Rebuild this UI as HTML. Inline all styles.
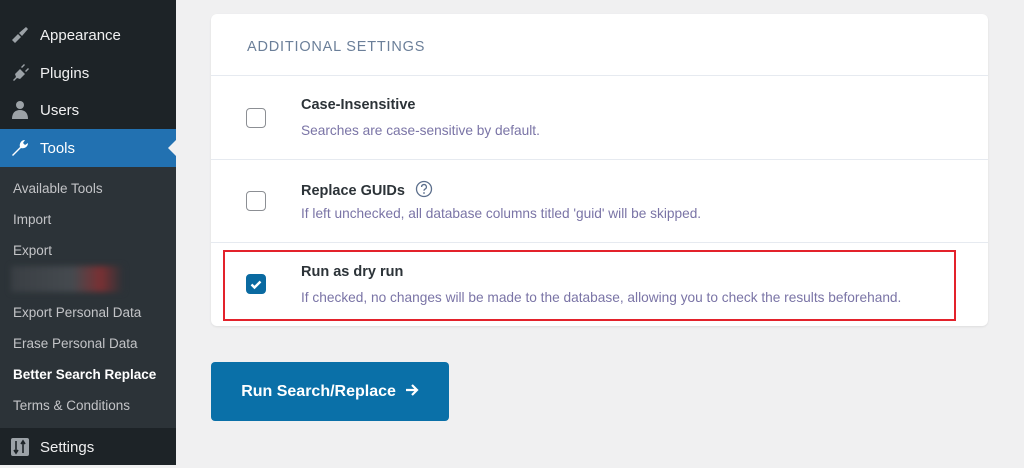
<!DOCTYPE html>
<html><head><style>
body{margin:0;width:1024px;height:465px;background:#f0f0f1;font-family:"Liberation Sans",sans-serif;position:relative;overflow:hidden}
.side{position:absolute;left:0;top:0;width:176px;height:465px;background:#1d2327}
.mi{position:absolute;left:0;width:176px;height:38px;color:#f0f0f1;font-size:15px;line-height:40px}
.mi span{position:absolute;left:40px}
.mi svg{position:absolute;left:10px;top:9px}
.sub{position:absolute;left:0;top:167px;width:176px;height:261px;background:#2c3338}
.sub div{position:absolute;left:13px;font-size:13.5px;color:#c3c4c7}
.card{position:absolute;left:211px;top:14px;width:777px;height:312px;background:#fff;border-radius:6px;box-shadow:0 1px 2px rgba(0,0,0,.08)}
.hd{position:absolute;left:36px;top:25px;font-size:14.5px;letter-spacing:.8px;color:#6b7f99}
.ln{position:absolute;left:0;width:777px;height:1px;background:#e6eaf0}
.cb{position:absolute;left:35px;width:18px;height:18px;border:1px solid #8c8f94;border-radius:4px;background:#fff}
.t{position:absolute;left:90px;font-size:14.5px;font-weight:bold;color:#2c3338}
.d{position:absolute;left:90px;font-size:13.7px;color:#7a74a6}
</style></head><body>
<div class="side">
<div class="mi" style="top:16px"><svg width="20" height="20" viewBox="0 0 20 20"><path d="M2 15l6-6 3 3-6 6zM9 8l7-6 2 2-6 7z" fill="#9ca2a7"/></svg><span>Appearance</span></div>
<div class="mi" style="top:54px"><svg width="20" height="20" viewBox="0 0 20 20"><path d="M3 17l3-3-1-3 5-5 5 5-5 5-3-1-3 3zM11 4l3-3 1 1-3 3zM15 8l3-3 1 1-3 3z" fill="#9ca2a7"/></svg><span>Plugins</span></div>
<div class="mi" style="top:91px"><svg width="20" height="20" viewBox="0 0 20 20"><circle cx="10" cy="5" r="4" fill="#9ca2a7"/><path d="M2 19c0-6 3-9 8-9s8 3 8 9z" fill="#9ca2a7"/></svg><span>Users</span></div>
<div class="mi" style="top:129px;background:#2271b1;color:#fff"><svg width="20" height="20" viewBox="0 0 20 20"><path d="M2 17l8-8c-1-3 1-7 5-7l-2 3 2 2 3-2c0 4-4 6-7 5l-8 8z" fill="#fff"/></svg><span>Tools</span><div style="position:absolute;right:0;top:11px;border:8px solid transparent;border-right-color:#f0f0f1"></div></div>
<div class="sub">
<div style="top:14px">Available Tools</div>
<div style="top:45px">Import</div>
<div style="top:76px">Export</div>
<div style="top:99px;left:11px;width:112px;height:26px;background:linear-gradient(90deg,#3a3f44,#454a4f 55%,#7a3033 80%,#2c3338);filter:blur(3px)"></div>
<div style="top:138px">Export Personal Data</div>
<div style="top:169px">Erase Personal Data</div>
<div style="top:200px;color:#fff;font-weight:bold">Better Search Replace</div>
<div style="top:231px">Terms &amp; Conditions</div>
</div>
<div class="mi" style="top:428px"><svg width="20" height="20" viewBox="0 0 20 20"><rect x="1" y="1" width="18" height="18" rx="2" fill="#9ca2a7"/><path d="M6 4v12M4 13l2 3 2-3M13 16V4M11 7l2-3 2 3" stroke="#1d2327" stroke-width="1.6" fill="none"/></svg><span>Settings</span></div>
</div>
<div class="card">
<div class="hd">ADDITIONAL SETTINGS</div>
<div class="ln" style="top:61px"></div>
<div class="cb" style="top:94px"></div>
<div class="t" style="top:83px">Case-Insensitive</div>
<div class="d" style="top:109px">Searches are case-sensitive by default.</div>
<div class="ln" style="top:145px"></div>
<div class="cb" style="top:177px"></div>
<div class="t" style="top:166px">Replace GUIDs <svg width="18" height="18" viewBox="0 0 18 18" style="vertical-align:-3px;margin-left:6px"><circle cx="9" cy="9" r="7.5" fill="none" stroke="#5c6f8c" stroke-width="1.3"/><path d="M6.6 7a2.4 2.4 0 1 1 3.4 2.1c-.7.4-1 .8-1 1.6" fill="none" stroke="#5c6f8c" stroke-width="1.3"/><circle cx="9" cy="13" r=".9" fill="#5c6f8c"/></svg></div>
<div class="d" style="top:192px">If left unchecked, all database columns titled 'guid' will be skipped.</div>
<div class="ln" style="top:228px"></div>
<div style="position:absolute;left:12px;top:236px;width:729px;height:67px;border:2px solid #e3222b"></div>
<div class="cb" style="top:260px;background:#0a6aa1;border-color:#0a6aa1"><svg width="18" height="18" viewBox="0 0 18 18"><path d="M4.5 9.5l3 3 6-6" stroke="#fff" stroke-width="2.4" fill="none"/></svg></div>
<div class="t" style="top:250px">Run as dry run</div>
<div class="d" style="top:276px">If checked, no changes will be made to the database, allowing you to check the results beforehand.</div>
</div>
<div style="position:absolute;left:211px;top:362px;width:238px;height:59px;background:#0a70a8;border-radius:4px;color:#fff;font-size:16px;font-weight:bold;line-height:59px;text-align:center">Run Search/Replace &nbsp;<svg width="14" height="14" viewBox="0 0 14 14" style="vertical-align:-1px"><path d="M1 7h11M7 2l5 5-5 5" stroke="#fff" stroke-width="2.2" fill="none"/></svg></div>
</body></html>
